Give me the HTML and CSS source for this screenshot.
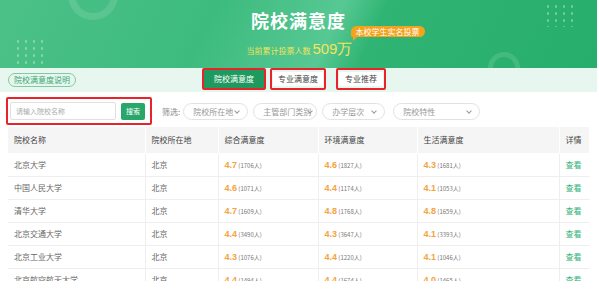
FILE: index.html
```html
<!DOCTYPE html>
<html lang="zh">
<head>
    <meta charset="UTF-8">
    <title>院校满意度</title>
    <link rel="stylesheet" href="styles.css">
</head>
<body>
    <header class="banner">
        <span class="deco-ring"></span>
        <span class="deco-ring deco-ring-low"></span>
        <span class="deco-dots"></span>
        <span class="deco-dots deco-dots-right"></span>
        <h1>院校满意度</h1>
        <div class="votes">
            当前累计投票人数 <strong>509万</strong>
            <span class="badge">本校学生实名投票</span>
        </div>
    </header>

    <nav class="tabbar">
        <a class="explain">院校满意度说明</a>
        <div class="tabs">
            <span class="mark"><a class="tab active">院校满意度</a></span>
            <span class="mark"><a class="tab">专业满意度</a></span>
            <span class="mark"><a class="tab">专业推荐</a></span>
        </div>
    </nav>

    <div class="toolbar">
        <div class="search mark">
            <input type="text" placeholder="请输入院校名称">
            <button>搜索</button>
        </div>
        <span class="filter-label">筛选:</span>
        <div class="select w1">院校所在地<i></i></div>
        <div class="select w2">主管部门类别<i></i></div>
        <div class="select w3">办学层次<i></i></div>
        <div class="select w4">院校特性<i></i></div>
    </div>

    <div class="table-wrap">
        <table>
            <thead>
                <tr>
                    <th class="c1">院校名称</th>
                    <th class="c2">院校所在地</th>
                    <th class="c3">综合满意度</th>
                    <th class="c4">环境满意度</th>
                    <th class="c5">生活满意度</th>
                    <th class="c6">详情</th>
                </tr>
            </thead>
            <tbody>
                <tr>
                    <td>北京大学</td><td>北京</td>
                    <td><b>4.7</b> (1706人)</td><td><b>4.6</b> (1827人)</td><td><b>4.3</b> (1681人)</td>
                    <td><a>查看</a></td>
                </tr>
                <tr>
                    <td>中国人民大学</td><td>北京</td>
                    <td><b>4.6</b> (1071人)</td><td><b>4.4</b> (1174人)</td><td><b>4.1</b> (1053人)</td>
                    <td><a>查看</a></td>
                </tr>
                <tr>
                    <td>清华大学</td><td>北京</td>
                    <td><b>4.7</b> (1609人)</td><td><b>4.8</b> (1768人)</td><td><b>4.8</b> (1659人)</td>
                    <td><a>查看</a></td>
                </tr>
                <tr>
                    <td>北京交通大学</td><td>北京</td>
                    <td><b>4.4</b> (3490人)</td><td><b>4.3</b> (3647人)</td><td><b>4.1</b> (3393人)</td>
                    <td><a>查看</a></td>
                </tr>
                <tr>
                    <td>北京工业大学</td><td>北京</td>
                    <td><b>4.3</b> (1076人)</td><td><b>4.4</b> (1220人)</td><td><b>4.1</b> (1046人)</td>
                    <td><a>查看</a></td>
                </tr>
                <tr>
                    <td>北京航空航天大学</td><td>北京</td>
                    <td><b>4.4</b> (1494人)</td><td><b>4.4</b> (1674人)</td><td><b>4.0</b> (1465人)</td>
                    <td><a>查看</a></td>
                </tr>
            </tbody>
        </table>
    </div>
</body>
</html>
```

FILE: styles.css
```css
body {
    margin: 0;
    font-family: "Noto Sans CJK SC", "Liberation Sans", sans-serif;
    background-color: #fff;
    color: #555;
    width: 599px;
    overflow: hidden;
}

.banner {
    position: relative;
    height: 68px;
    margin-right: 2px;
    overflow: hidden;
    background: linear-gradient(115deg, #4cc187 0%, #3dbb7e 35%, #57c893 55%, #2fb473 62%, #28ae6c 100%);
    text-align: center;
}

.deco-ring {
    position: absolute;
    left: 68px;
    top: -30px;
    width: 36px;
    height: 36px;
    border: 7px solid rgba(255, 255, 255, 0.12);
    border-radius: 50%;
}

.deco-ring-low {
    left: 488px;
    top: 52px;
    width: 22px;
    height: 22px;
    border-width: 5px;
}

.deco-dots {
    position: absolute;
    left: 14px;
    top: 38px;
    width: 34px;
    height: 26px;
    background-image: radial-gradient(circle, rgba(255, 255, 255, 0.35) 1px, transparent 1.5px);
    background-size: 8px 7px;
}

.deco-dots-right {
    left: 544px;
    top: 3px;
    height: 24px;
}

.banner h1 {
    margin: 0;
    padding-top: 8px;
    font-size: 18px;
    line-height: 24px;
    font-weight: bold;
    color: #fff;
    letter-spacing: 1px;
}

.votes {
    position: relative;
    display: inline-block;
    margin-top: 8px;
    margin-left: 2px;
    font-size: 8px;
    color: #f3e45a;
}

.votes strong {
    font-size: 15px;
    font-weight: normal;
    font-family: "Liberation Sans", sans-serif;
}

.badge {
    position: absolute;
    left: 104px;
    top: -14px;
    padding: 0 5px;
    font-size: 8px;
    line-height: 11px;
    white-space: nowrap;
    color: #fff;
    background-color: #f5a21c;
    border-radius: 6px 6px 6px 2px;
}

.badge::after {
    content: "";
    position: absolute;
    left: 2px;
    bottom: -4px;
    border-top: 4px solid #f5a21c;
    border-right: 4px solid transparent;
}

.tabbar {
    position: relative;
    display: flex;
    align-items: center;
    height: 24px;
    margin-right: 2px;
    padding-left: 8px;
    background-color: #e7f6ee;
}

.explain {
    font-size: 8px;
    line-height: 12px;
    padding: 0 5px;
    color: #3ba974;
    border: 1px solid #7fcaa3;
    border-radius: 8px;
}

.tabs {
    position: absolute;
    left: 202px;
    top: 0;
    display: flex;
    gap: 4px;
}

.mark {
    border: 2px solid #e8232a;
    border-radius: 2px;
}

.tabs .mark {
    height: 18px;
    display: flex;
    align-items: center;
    padding: 0 1px;
}

.tabs .mark:nth-child(3) {
    margin-left: 6px;
}

.tab {
    display: block;
    font-size: 8px;
    line-height: 14px;
    padding: 0 5px;
    color: #444;
    background-color: #fff;
}

.tabs .mark:nth-child(3) .tab {
    padding: 0 6px;
}

.tab.active {
    line-height: 18px;
    padding: 0 10px;
    color: #fff;
    background-color: #1f9a5f;
}

.tabs .mark:first-child {
    padding: 0;
}

.toolbar {
    display: flex;
    align-items: center;
    height: 32px;
    padding: 3px 0 0 6px;
}

.search {
    display: flex;
    align-items: center;
    gap: 5px;
    height: 24px;
    padding: 0 5px 0 2px;
}

.search input {
    width: 94px;
    height: 16px;
    padding: 0 5px;
    font-family: inherit;
    font-size: 7px;
    border: 1px solid #e0e0e0;
    border-radius: 2px;
    box-sizing: content-box;
}

.search input::placeholder {
    color: #aaa;
}

.search button {
    width: 24px;
    height: 17px;
    padding: 0;
    font-family: inherit;
    font-size: 7px;
    color: #fff;
    background-color: #2aa66a;
    border: none;
    border-radius: 2px;
}

.filter-label {
    margin-left: 10px;
    font-size: 8px;
    color: #888;
}

.select {
    position: relative;
    height: 17px;
    line-height: 15px;
    margin-left: 5px;
    padding-left: 9px;
    font-size: 8px;
    color: #999;
    border: 1px solid #e2e2e2;
    border-radius: 9px;
    box-sizing: border-box;
}

.select i {
    position: absolute;
    right: 8px;
    top: 5px;
    width: 3px;
    height: 3px;
    border-right: 1px solid #999;
    border-bottom: 1px solid #999;
    transform: rotate(45deg);
}

.w1 { width: 65px; margin-left: 3px; }
.w2 { width: 64px; }
.w3 { width: 63px; }
.w4 { width: 87px; margin-left: 8px; }
.w2 i { right: 4px; }

.table-wrap {
    height: 154px;
    margin: 0 10px 0 8px;
    overflow: hidden;
}

table {
    width: 581px;
    border-collapse: collapse;
    table-layout: fixed;
}

th, td {
    box-sizing: border-box;
    border: 1px solid #eee;
    border-top: none;
    border-left: none;
    text-align: left;
    padding: 0 0 0 6px;
    font-weight: normal;
    white-space: nowrap;
    overflow: hidden;
}

th:last-child, td:last-child {
    border-right: none;
}

th {
    height: 26px;
    font-size: 8px;
    color: #444;
    background-color: #f5f5f5;
    border-color: #fff;
}

td {
    height: 23px;
    font-size: 8px;
    color: #666;
}

td b {
    font-size: 9px;
    font-weight: bold;
    color: #f5a33c;
    font-family: "Liberation Sans", sans-serif;
}

td:nth-child(n+3) {
    font-size: 6px;
    color: #777;
}

td a {
    font-size: 8px;
    color: #2fb276;
}

.c1 { width: 137px; }
.c2 { width: 73px; }
.c3 { width: 100px; }
.c4 { width: 99px; }
.c5 { width: 142px; }
.c6 { width: 30px; }
```
